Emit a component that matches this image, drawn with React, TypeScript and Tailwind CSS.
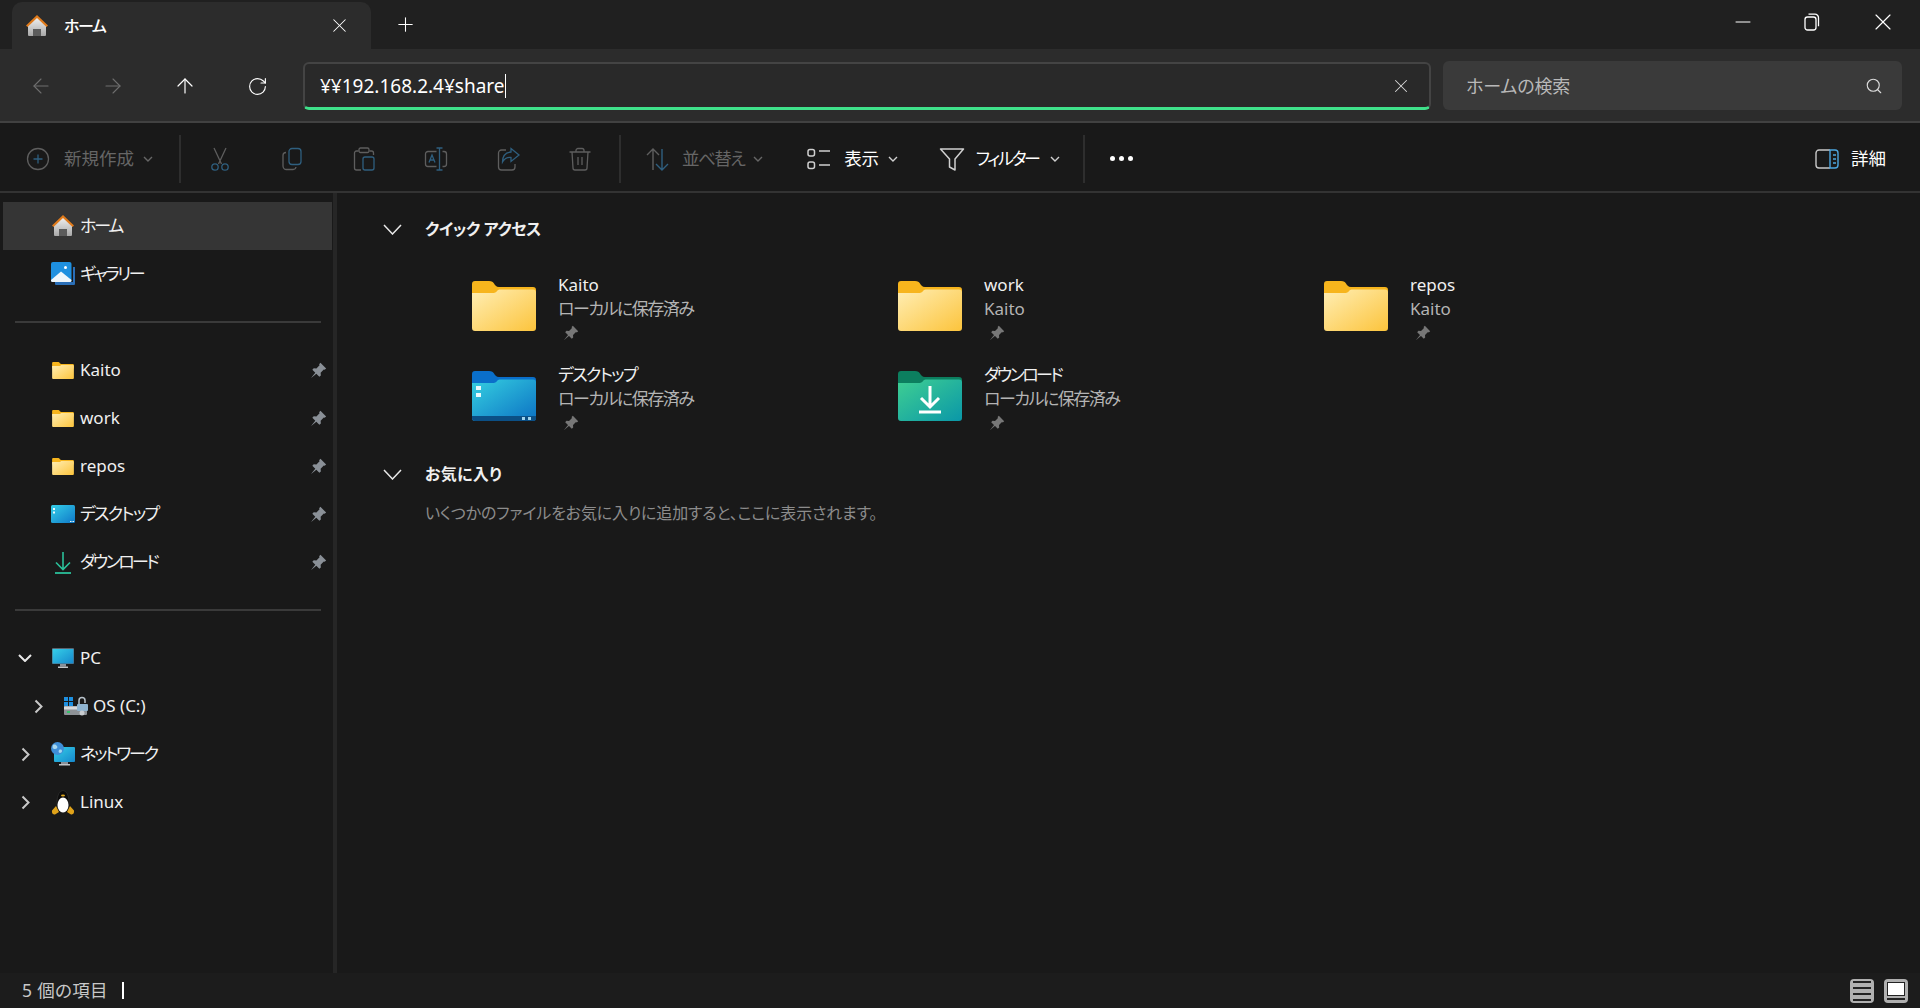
import { X, Plus, Minus, ArrowLeft, ArrowRight, ArrowUp, RotateCw, Search } from 'lucide-react';
import type { ReactNode } from 'react';

// ── Colour icons ─────────────────────────────────────────────────────────────

function HomeIcon({ size = 24 }: { size?: number }) {
  return (
    <svg width={size} height={size} viewBox="0 0 24 24">
      <defs>
        <linearGradient id="homeWall" x1="0" y1="0" x2="0" y2="1">
          <stop offset="0" stopColor="#f2f2f2" />
          <stop offset="1" stopColor="#a8a8a8" />
        </linearGradient>
      </defs>
      <path d="M3 11 12 3l9 8v10a1 1 0 0 1-1 1h-4v-7H8v7H4a1 1 0 0 1-1-1z" fill="url(#homeWall)" />
      <path d="M8 15h8v7H8z" fill="#5c5c5c" />
      <path d="M1 11.500 12 1l11 10.500-1.500 1.500L12 4 2.500 13z" fill="#e07b1c" />
    </svg>
  );
}

function GalleryIcon() {
  return (
    <svg width="24" height="24" viewBox="0 0 24 24">
      <path d="M4 20h18V5h2v17a1 1 0 0 1-1 1H5a1 1 0 0 1-1-1z" fill="#2a6fb8" />
      <rect x="0" y="0" width="20.500" height="20" rx="2" fill="#1e90e0" />
      <path d="M0 18 10 9.500 20.500 18v.5a1.500 1.500 0 0 1-1.500 1.500H1.500A1.500 1.500 0 0 1 0 18.500z" fill="#eef6fb" />
      <circle cx="14.500" cy="5.500" r="1.500" fill="#fff" />
    </svg>
  );
}

function FolderIcon({ width = 22, height = 17 }: { width?: number; height?: number }) {
  return (
    <svg width={width} height={height} viewBox="0 0 64 50">
      <defs>
        <linearGradient id="folderFront" x1="0" y1="0" x2="1" y2="1">
          <stop offset="0" stopColor="#ffeeb4" />
          <stop offset="1" stopColor="#fcc43c" />
        </linearGradient>
      </defs>
      <path d="M0 3a3 3 0 0 1 3-3h14c3 0 4 1 5 2.500S24 6 27 6h34a3 3 0 0 1 3 3v10H0z" fill="#f7b51d" />
      <path d="M0 12h20c3 0 4-.5 5-2s2-1.500 4-1.500h32a3 3 0 0 1 3 3V47a3 3 0 0 1-3 3H3a3 3 0 0 1-3-3z" fill="url(#folderFront)" />
    </svg>
  );
}

function DesktopFolder() {
  return (
    <svg width="64" height="50" viewBox="0 0 64 50">
      <defs>
        <linearGradient id="desktopFront" x1="0" y1="0" x2="1" y2="1">
          <stop offset="0" stopColor="#35cfe0" />
          <stop offset="1" stopColor="#0c72c4" />
        </linearGradient>
      </defs>
      <path d="M0 3a3 3 0 0 1 3-3h14c3 0 4 1 5 2.500S24 6 27 6h34a3 3 0 0 1 3 3v10H0z" fill="#0a6fca" />
      <path d="M0 12h20c3 0 4-.5 5-2s2-1.500 4-1.500h32a3 3 0 0 1 3 3V47a3 3 0 0 1-3 3H3a3 3 0 0 1-3-3z" fill="url(#desktopFront)" />
      <path d="M0 45h64v2a3 3 0 0 1-3 3H3a3 3 0 0 1-3-3z" fill="#0b4f85" />
      <path d="M4 15h5v4H4zM4 22h5v4H4z" fill="#eaf9fc" />
      <path d="M50 46h3v3h-3zM56 46h3v3h-3z" fill="#9fd4ee" />
    </svg>
  );
}

function DownloadFolder() {
  return (
    <svg width="64" height="50" viewBox="0 0 64 50">
      <defs>
        <linearGradient id="downloadFront" x1="0" y1="0" x2="1" y2="1">
          <stop offset="0" stopColor="#3fcf92" />
          <stop offset="1" stopColor="#0a97a8" />
        </linearGradient>
      </defs>
      <path d="M0 3a3 3 0 0 1 3-3h14c3 0 4 1 5 2.500S24 6 27 6h34a3 3 0 0 1 3 3v10H0z" fill="#0c7f5f" />
      <path d="M0 12h20c3 0 4-.5 5-2s2-1.500 4-1.500h32a3 3 0 0 1 3 3V47a3 3 0 0 1-3 3H3a3 3 0 0 1-3-3z" fill="url(#downloadFront)" />
      <path d="M32 15v20M23 27l9 9 9-9" fill="none" stroke="#fff" strokeWidth="3" />
      <path d="M21 41h22" stroke="#fff" strokeWidth="3" />
    </svg>
  );
}

function SideDesktop() {
  return (
    <svg width="24" height="18" viewBox="0 0 24 18">
      <defs>
        <linearGradient id="sideDesktop" x1="0" y1="0" x2="1" y2="1">
          <stop offset="0" stopColor="#35cfe8" />
          <stop offset="1" stopColor="#0f78c8" />
        </linearGradient>
      </defs>
      <rect width="24" height="18" rx="1.500" fill="url(#sideDesktop)" />
      <path d="M2 3h2v2H2zM2 6.500h2v2H2zM19 16h1.500v1H19zM21.500 16H23v1h-1.500z" fill="#e8f8fc" />
    </svg>
  );
}

function SideDownload() {
  return (
    <svg width="24" height="24" viewBox="0 0 24 24">
      <path d="M12 2v17M5 12.500l7 7 7-7" fill="none" stroke="#2bc09a" strokeWidth="1.600" />
      <path d="M4 23h16" stroke="#2bc09a" strokeWidth="1.800" />
    </svg>
  );
}

function PcIcon() {
  return (
    <svg width="24" height="20" viewBox="0 0 24 20">
      <defs>
        <linearGradient id="pcScreen" x1="0" y1="0" x2="1" y2="1">
          <stop offset="0" stopColor="#35cfe8" />
          <stop offset="1" stopColor="#1688cc" />
        </linearGradient>
      </defs>
      <rect x="1" y="0" width="22" height="16" rx="1" fill="#5a6470" />
      <rect x="1.500" y="1" width="21" height="14.500" fill="url(#pcScreen)" />
      <path d="M9 16h6v2.500H9z" fill="#8a9098" />
      <path d="M7 18.500h10v1.500H7z" fill="#c0c4c8" />
    </svg>
  );
}

function DriveIcon() {
  return (
    <svg width="24" height="20" viewBox="0 0 24 20">
      <path d="M0 1h4v4H0zM5 1h4v4H5zM0 6h4v4H0zM5 6h4v4H5z" fill="#1e90e0" />
      <rect x="0" y="10" width="23" height="9" rx="1" fill="#8d9196" />
      <rect x="0" y="10.500" width="23" height="3" fill="#d8dadc" />
      <path d="M3 15h3v2H3z" fill="#35c06a" />
      <path d="M15 9V4.500a3 3 0 0 1 6 0V7" fill="none" stroke="#b8c2ca" strokeWidth="1.500" />
      <rect x="13" y="8" width="11" height="7" rx="1" fill="#8fb4d0" />
      <circle cx="18" cy="17" r="2.500" fill="#c8ccd0" />
    </svg>
  );
}

function NetworkIcon() {
  return (
    <svg width="24" height="24" viewBox="0 0 24 24">
      <defs>
        <linearGradient id="netScreen" x1="0" y1="0" x2="1" y2="1">
          <stop offset="0" stopColor="#35cfe8" />
          <stop offset="1" stopColor="#1688cc" />
        </linearGradient>
      </defs>
      <rect x="3" y="5" width="21" height="15" rx="1" fill="url(#netScreen)" />
      <path d="M10 20h7v2h-7z" fill="#8a9098" />
      <path d="M8 22h11v1.500H8z" fill="#c0c4c8" />
      <circle cx="6.500" cy="6.500" r="6.500" fill="#3f8fd8" />
      <path d="M2 3c2-1 3 0 4 1s0 3-2 3-3-1-2-4zM8 8c2-1 3 0 3 1s-1 2-2 2-2-1-1-3z" fill="#a8d8f0" />
    </svg>
  );
}

function PenguinIcon() {
  return (
    <svg width="24" height="25" viewBox="0 0 24 25">
      <ellipse cx="12" cy="11.500" rx="6" ry="11" fill="#0c0c0c" stroke="#3a3a3a" strokeWidth=".5" />
      <ellipse cx="12" cy="15" rx="5.500" ry="7.500" fill="#fff" />
      <ellipse cx="12" cy="5.500" rx="2" ry="1" fill="#e0a820" />
      <path d="M1 20.500 5 16l3 6-4 2.500c-1 .3-3.500-.5-3-4zM23 20.500 19 16l-3 6 4 2.500c1 .3 3.500-.5 3-4z" fill="#e0a31a" />
    </svg>
  );
}

function PinIcon({ size = 16, color = '#8a9097' }: { size?: number; color?: string }) {
  return (
    <svg width={size} height={size} viewBox="0 0 16 16">
      <path d="M9.800.8 15.200 6.200 13.800 7.400 13 7l-3 3 .2 2.600-1.400 1.200L2.200 7.200l1.300-1.400L6 6l3-3-.4-.9z" fill={color} />
      <path d="M5.500 9.500.8 15.200l5.700-4.700z" fill={color} />
    </svg>
  );
}

// Chevrons drawn wider than the icon package's, like the shell's own glyphs
function ChevronDownWide({ width = 14, height = 8, color = '#e8e8e8', stroke = 2 }: { width?: number; height?: number; color?: string; stroke?: number }) {
  return (
    <svg width={width} height={height} viewBox={`0 0 ${width} ${height}`} fill="none" stroke={color} strokeWidth={stroke}>
      <path d={`M1 1l${width / 2 - 1} ${height - 2} ${width / 2 - 1}-${height - 2}`} />
    </svg>
  );
}

function ChevronRightWide() {
  return (
    <svg width="9" height="15" viewBox="0 0 9 15" fill="none" stroke="#c8c8c8" strokeWidth="2">
      <path d="M1.500 1.500l6 6-6 6" />
    </svg>
  );
}

// ── Toolbar line icons: gray strokes with a blue accent when disabled ─────────

const gray = '#5e5e5e';
const blue = '#2f5f7f';

function LineIcon({ children, size = 24 }: { children: ReactNode; size?: number }) {
  return (
    <svg width={size} height={size} viewBox="0 0 24 24" fill="none" strokeWidth="1.300">
      {children}
    </svg>
  );
}

const toolIcons: ReactNode[] = [
  <LineIcon key="cut">
    <path d="M6 1l7.500 16M18 1l-7.500 16" stroke={gray} />
    <circle cx="7" cy="20" r="3.200" stroke={blue} />
    <circle cx="17" cy="20" r="3.200" stroke={blue} />
  </LineIcon>,
  <LineIcon key="copy">
    <rect x="9" y="1.500" width="12" height="16" rx="3" stroke={blue} />
    <path d="M6 5.500a3 3 0 0 0-3 3V19a3.500 3.500 0 0 0 3.500 3.500H13a3 3 0 0 0 3-2.500" stroke={gray} />
  </LineIcon>,
  <LineIcon key="paste">
    <path d="M6.500 4H4.500A2 2 0 0 0 2.500 6v15a2 2 0 0 0 2 2H9M17.500 4h2A2 2 0 0 1 21.500 6v2" stroke={gray} />
    <rect x="7" y="1" width="10" height="4.500" rx="1.500" stroke={gray} />
    <rect x="11" y="10" width="11" height="13" rx="2" stroke={blue} />
  </LineIcon>,
  <LineIcon key="rename">
    <path d="M15.500 1v22M12.500 1h6M12.500 23h6" stroke={blue} />
    <path d="M12.500 4.500H4a2.500 2.500 0 0 0-2.500 2.500v10A2.500 2.500 0 0 0 4 19.500h8.500M18.500 4.500H20A2.500 2.500 0 0 1 22.500 7v10a2.500 2.500 0 0 1-2.500 2.500h-1.500" stroke={gray} />
    <path d="M5 15.500 8 8l3 7.500M6 13h4" stroke={blue} />
  </LineIcon>,
  <LineIcon key="share">
    <path d="M10 3H5.500A3 3 0 0 0 2.500 6v14a3 3 0 0 0 3 3H16a3 3 0 0 0 3-3v-3" stroke={gray} />
    <path d="M15 1.500 23 8l-8 6.500v-4c-4-.5-6.500 1-8.500 4.500 0-6 3-9.500 8.500-10z" stroke={blue} />
  </LineIcon>,
  <LineIcon key="delete">
    <path d="M1.500 5h21M8 5V3.500A2 2 0 0 1 10 1.500h4a2 2 0 0 1 2 2V5" stroke={gray} />
    <path d="M4 5l1 16a2 2 0 0 0 2 2h10a2 2 0 0 0 2-2l1-16" stroke={gray} />
    <path d="M10 10v8M14 10v8" stroke={gray} />
  </LineIcon>,
];

function Divider() {
  return <div className="w-[2px] h-[48px] bg-[#2e2e2e] shrink-0" />;
}

function Caret({ className, color }: { className: string; color: string }) {
  return (
    <span className={className}>
      <ChevronDownWide width={10} height={6} color={color} stroke={1.400} />
    </span>
  );
}

// ── Sidebar ──────────────────────────────────────────────────────────────────

function SideRow({
  icon,
  label,
  track = '',
  pinned,
  active,
  chevron,
  indent,
}: {
  icon: ReactNode;
  label: string;
  track?: string;
  pinned?: boolean;
  active?: boolean;
  chevron?: 'down' | 'right';
  indent?: boolean;
}) {
  return (
    <div className={`h-12 ml-[3px] w-[329px] flex items-center shrink-0 ${active ? 'bg-[#353535]' : ''}`}>
      <div className={`h-full shrink-0 flex items-center ${indent ? 'w-[61px] pl-[31px]' : chevron === 'down' ? 'w-[48px] pl-[15px]' : 'w-[48px] pl-[18px]'}`}>
        {chevron === 'down' && <ChevronDownWide />}
        {chevron === 'right' && <ChevronRightWide />}
      </div>
      <div className="w-[24px] flex items-center justify-center shrink-0">{icon}</div>
      <span className={`ml-[5px] text-[17px] text-[#f0f0f0] ${track}`}>{label}</span>
      {pinned && (
        <div className="ml-auto mr-[5px]">
          <PinIcon size={17} />
        </div>
      )}
    </div>
  );
}

function Sidebar() {
  return (
    <div className="w-[333px] shrink-0 pt-[9px] flex flex-col">
      <SideRow active icon={<HomeIcon />} label="ホーム" track="tracking-[-2.200px]" />
      <SideRow icon={<GalleryIcon />} label="ギャラリー" track="tracking-[-2.400px]" />
      <div className="h-[48px] flex items-center shrink-0 pl-[15px]">
        <div className="w-[306px] h-[2px] bg-[#3a3a3a]" />
      </div>
      <SideRow pinned icon={<FolderIcon />} label="Kaito" />
      <SideRow pinned icon={<FolderIcon />} label="work" />
      <SideRow pinned icon={<FolderIcon />} label="repos" />
      <SideRow pinned icon={<SideDesktop />} label="デスクトップ" track="tracking-[-1.700px]" />
      <SideRow pinned icon={<SideDownload />} label="ダウンロード" track="tracking-[-2.600px]" />
      <div className="h-[48px] flex items-center shrink-0 pl-[15px]">
        <div className="w-[306px] h-[2px] bg-[#3a3a3a]" />
      </div>
      <SideRow chevron="down" icon={<PcIcon />} label="PC" />
      <SideRow chevron="right" indent icon={<DriveIcon />} label="OS (C:)" />
      <SideRow chevron="right" icon={<NetworkIcon />} label="ネットワーク" track="tracking-[-2.200px]" />
      <SideRow chevron="right" icon={<PenguinIcon />} label="Linux" />
    </div>
  );
}

// ── Home page content ────────────────────────────────────────────────────────

function SectionHeader({ label, track }: { label: string; track: string }) {
  return (
    <div className="h-10 flex items-center pl-[46px]">
      <ChevronDownWide width={19} height={11} stroke={1.500} />
      <span className={`ml-[23px] text-[16px] font-bold text-[#f0f0f0] ${track}`}>{label}</span>
    </div>
  );
}

function Tile({ icon, name, sub, track = '' }: { icon: ReactNode; name: string; sub: string; track?: string }) {
  return (
    <div className="flex">
      <div className="w-[64px] mt-[10px] shrink-0">{icon}</div>
      <div className="ml-[22px] mt-[2px] flex flex-col">
        <span className={`h-[24px] leading-[24px] text-[17px] text-[#f0f0f0] ${track}`}>{name}</span>
        <span className={`h-[24px] leading-[24px] text-[17px] text-[#b4b4b4] ${sub !== 'Kaito' ? 'tracking-[-1.500px]' : ''}`}>{sub}</span>
        <span className="h-[24px] flex items-center pl-[5px]">
          <PinIcon color="#777777" />
        </span>
      </div>
    </div>
  );
}

function Content() {
  return (
    <div className="flex-1 pt-[16px]">
      <SectionHeader label="クイック アクセス" track="tracking-[-0.400px]" />
      <div className="mt-[22px] pl-[135px] grid grid-cols-[repeat(3,426px)] auto-rows-[90px]">
        <Tile icon={<FolderIcon width={64} height={50} />} name="Kaito" sub="ローカルに保存済み" />
        <Tile icon={<FolderIcon width={64} height={50} />} name="work" sub="Kaito" />
        <Tile icon={<FolderIcon width={64} height={50} />} name="repos" sub="Kaito" />
        <Tile icon={<DesktopFolder />} name="デスクトップ" sub="ローカルに保存済み" track="tracking-[-1.600px]" />
        <Tile icon={<DownloadFolder />} name="ダウンロード" sub="ローカルに保存済み" track="tracking-[-2.600px]" />
      </div>
      <div className="mt-[3px]">
        <SectionHeader label="お気に入り" track="tracking-[0.300px]" />
      </div>
      <p className="mt-[7px] pl-[88px] h-[24px] leading-[24px] text-[16px] tracking-[-0.150px] text-[#8c8c8c]">
        いくつかのファイルをお気に入りに追加すると、ここに表示されます。
      </p>
    </div>
  );
}

// ── Root ─────────────────────────────────────────────────────────────────────

export default function App() {
  return (
    <div className="h-screen w-full flex flex-col overflow-hidden bg-[#191919] text-white [font-family:'Noto_Sans','Noto_Sans_CJK_JP',sans-serif] [font-feature-settings:'palt']">
      {/* Title bar with the tab strip */}
      <div className="h-[49px] shrink-0 bg-[#202020] flex pl-[12px]">
        <div className="mt-[2px] w-[359px] h-[47px] rounded-t-[10px] bg-[#2c2c2c] flex items-center pl-[13px] pr-[20px]">
          <HomeIcon />
          <span className="ml-[15px] text-[16px] font-medium tracking-[-1.500px]">ホーム</span>
          <X size={23} strokeWidth={1.100} className="ml-auto" />
        </div>
        <div className="ml-[23px] flex items-center">
          <Plus size={23} strokeWidth={1.100} />
        </div>
        <div className="ml-auto flex">
          <div className="w-[69px] flex items-center justify-center pb-[5px]">
            <Minus size={24} strokeWidth={1} />
          </div>
          <div className="w-[69px] flex items-center justify-center pb-[5px]">
            <svg width="16" height="18" viewBox="0 0 16 18" fill="none" stroke="#fff" strokeWidth="1.300">
              <rect x="1" y="4" width="11" height="13" rx="2.500" />
              <path d="M4.500 1.200h6.500A3.500 3.500 0 0 1 14.500 4.700v8.500" />
            </svg>
          </div>
          <div className="w-[74px] flex items-center justify-center pb-[5px]">
            <X size={28} strokeWidth={1} />
          </div>
        </div>
      </div>

      {/* Navigation bar */}
      <div className="h-[74px] shrink-0 bg-[#2c2c2c] border-b-[2px] border-[#414141] flex items-start pl-[5px]">
        <div className="w-[72px] h-[74px] flex items-center justify-center text-[#6e6e6e]">
          <ArrowLeft size={24} strokeWidth={1.100} />
        </div>
        <div className="w-[72px] h-[74px] flex items-center justify-center text-[#6e6e6e]">
          <ArrowRight size={24} strokeWidth={1.100} />
        </div>
        <div className="w-[72px] h-[74px] flex items-center justify-center">
          <ArrowUp size={24} strokeWidth={1.200} />
        </div>
        <div className="w-[72px] h-[74px] flex items-center justify-center">
          <RotateCw size={21} strokeWidth={1.300} />
        </div>
        <div className="ml-[10px] mt-[13px] h-[48px] flex-1 rounded-[6px] bg-[#292929] border-[2px] border-[#444444] border-b-[3px] border-b-[#3fe08a] flex items-center pl-[15px] pr-[17px]">
          <span className="pt-[1px] text-[19px] text-white">¥¥192.168.2.4¥share</span>
          <span className="w-[1.500px] h-[24px] bg-white" />
          <X size={22} strokeWidth={1.100} className="ml-auto text-[#d8d8d8]" />
        </div>
        <div className="ml-[12px] mr-[18px] mt-[12px] h-[49px] w-[459px] rounded-[6px] bg-[#3a3a3a] flex items-center pl-[23px] pr-[19px]">
          <span className="pt-[1px] text-[18px] tracking-[-0.100px] text-[#b8b8b8]">ホームの検索</span>
          <Search size={18} strokeWidth={1.500} className="ml-auto text-[#dcdcdc]" />
        </div>
      </div>

      {/* Command bar */}
      <div className="h-[70px] shrink-0 bg-[#191919] border-b-[2px] border-[#333333] flex items-center pt-[3px]">
        <div className="w-[179px] flex items-center pl-[26px] shrink-0 text-[#666666]">
          <svg width="24" height="24" viewBox="0 0 24 24" fill="none" strokeWidth="1.300">
            <circle cx="12" cy="12" r="10.500" stroke={gray} />
            <path d="M12 7.500v9M7.500 12h9" stroke={blue} />
          </svg>
          <span className="ml-[2px] pl-[12px] text-[17.500px]">新規作成</span>
          <Caret className="ml-[9px]" color="#666666" />
        </div>
        <Divider />
        <div className="ml-[3px] flex">
          {toolIcons.map((icon, i) => (
            <div key={i} className="w-[72px] flex items-center justify-center">
              {icon}
            </div>
          ))}
        </div>
        <div className="ml-[3px]">
          <Divider />
        </div>
        <div className="ml-[25px] flex items-center text-[#666666]">
          <svg width="24" height="24" viewBox="0 0 24 24" fill="none" strokeWidth="1.400">
            <path d="M7 23V2M1 8l6-6 6 6" stroke={gray} />
            <path d="M16 2v21M10 17l6 6 6-6" stroke={blue} />
          </svg>
          <span className="ml-[12px] text-[17.500px] tracking-[-1.600px]">並べ替え</span>
          <Caret className="ml-[9px]" color="#666666" />
        </div>
        <div className="ml-[44px] flex items-center">
          <svg width="24" height="24" viewBox="0 0 24 24" fill="none" stroke="#d0d0d0" strokeWidth="1.500">
            <rect x="1" y="2.500" width="6.500" height="6.500" rx="2" />
            <rect x="1" y="15" width="6.500" height="6.500" rx="2" />
            <path d="M12 4h11M12 18h11" />
          </svg>
          <span className="ml-[13px] text-[17.500px] tracking-[-0.300px]">表示</span>
          <Caret className="ml-[9px]" color="#d0d0d0" />
        </div>
        <div className="ml-[41px] flex items-center">
          <svg width="26" height="26" viewBox="0 0 26 26" fill="none" stroke="#d0d0d0" strokeWidth="1.500" strokeLinejoin="round">
            <path d="M1.500 3h23l-8.500 10v11l-5.500-3v-8z" />
          </svg>
          <span className="ml-[11px] text-[17px] tracking-[-2.300px]">フィルター</span>
          <Caret className="ml-[11px]" color="#d0d0d0" />
        </div>
        <div className="ml-[23px]">
          <Divider />
        </div>
        <div className="ml-[25px] flex gap-[4px]">
          <span className="w-[5px] h-[5px] rounded-full bg-white" />
          <span className="w-[5px] h-[5px] rounded-full bg-white" />
          <span className="w-[5px] h-[5px] rounded-full bg-white" />
        </div>
        <div className="ml-auto mr-[34px] flex items-center">
          <svg width="24" height="20" viewBox="0 0 24 20" fill="none" strokeWidth="1.400">
            <path d="M15 1H4a3 3 0 0 0-3 3v12a3 3 0 0 0 3 3h11" stroke="#c8c8c8" />
            <path d="M15 1h5a3 3 0 0 1 3 3v12a3 3 0 0 1-3 3h-5z" stroke="#4ca6e0" />
            <path d="M18 6h3M18 10h3M18 14h3" stroke="#4ca6e0" />
          </svg>
          <span className="ml-[12px] text-[17.500px]">詳細</span>
        </div>
      </div>

      {/* Navigation pane and page */}
      <div className="flex-1 flex min-h-0">
        <Sidebar />
        <div className="w-[4px] shrink-0 bg-[#262626]" />
        <Content />
      </div>

      {/* Status bar */}
      <div className="h-[35px] shrink-0 bg-[#1c1c1c] flex items-center pl-[22px] pr-[12px]">
        <span className="text-[17.500px] tracking-[0.300px] text-[#c8c8c8]">5 個の項目</span>
        <span className="ml-[14px] w-[2px] h-[17px] bg-white" />
        <div className="ml-auto flex gap-[10px]">
          <div className="w-[24px] h-[24px] rounded-[4px] bg-[#b0b0b0] flex flex-col justify-center gap-[4px] px-[3px]">
            <span className="h-[2px] bg-[#222]" />
            <span className="h-[2px] bg-[#222]" />
            <span className="h-[2px] bg-[#222]" />
            <span className="h-[2px] bg-[#222]" />
          </div>
          <div className="w-[24px] h-[24px] rounded-[4px] bg-[#b0b0b0] flex flex-col p-[3px] gap-[2px]">
            <span className="flex-1 bg-white border border-[#222]" />
            <span className="h-[1.500px] bg-[#222]" />
          </div>
        </div>
      </div>
    </div>
  );
}
